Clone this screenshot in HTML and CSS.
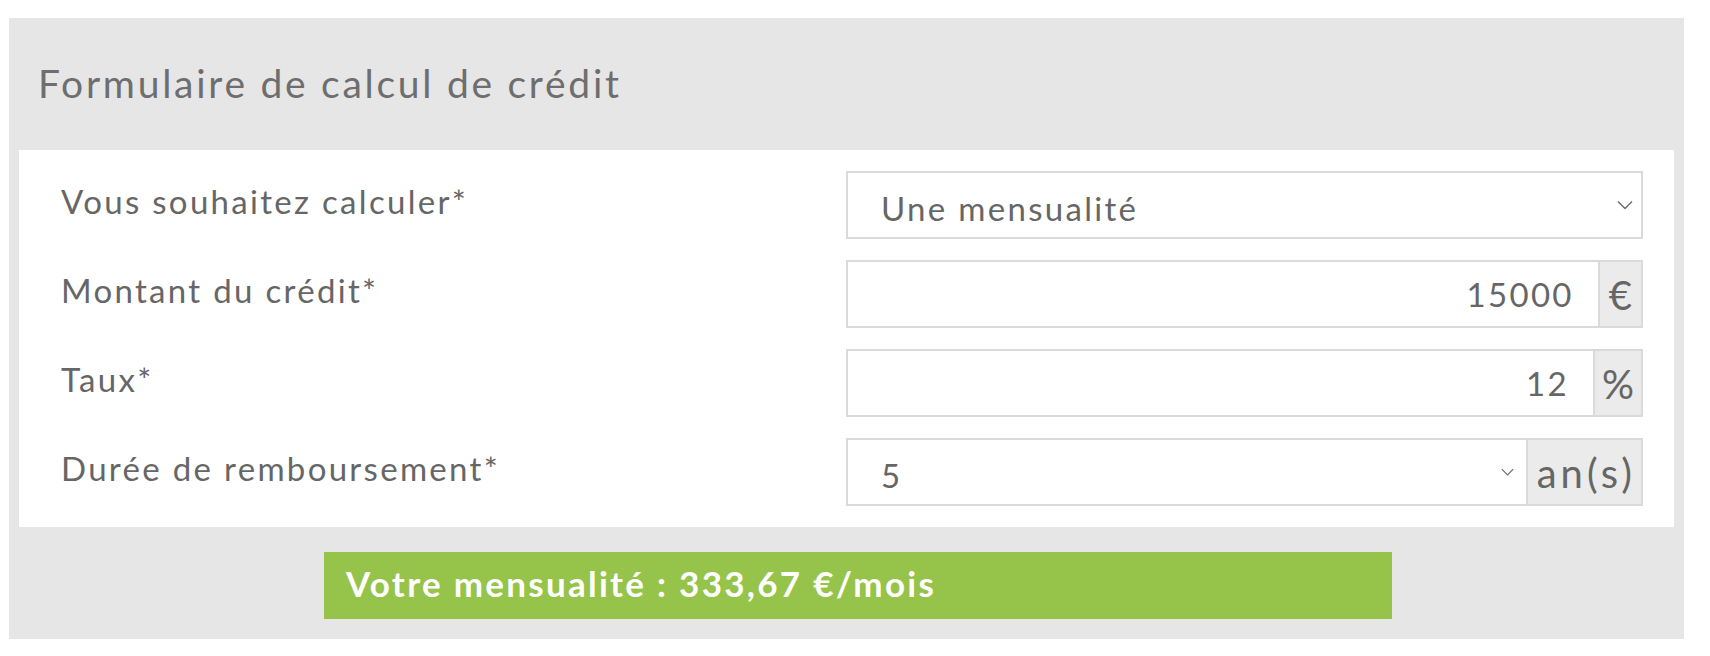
FILE: index.html
```html
<!DOCTYPE html>
<html lang="fr">
<head>
    <meta charset="UTF-8">
    <meta name="viewport" content="width=device-width, initial-scale=1.0">
    <title>Calcul de crédit</title>
    <link rel="stylesheet" href="styles.css">
</head>
<body>

    <!-- Credit calculator -->
    <div class="calc">
        <h2 class="calc-title">Formulaire de calcul de crédit</h2>

        <form class="calc-form">
            <label class="calc-label" for="type">Vous souhaitez calculer*</label>
            <div class="select-wrap">
                <select id="type" class="field">
                    <option>Une mensualité</option>
                    <option>Un montant</option>
                    <option>Une durée</option>
                </select>
                <svg class="chevron" width="16" height="9" viewBox="0 0 16 9"><polyline points="1,1 8,8 15,1" /></svg>
            </div>

            <label class="calc-label" for="amount">Montant du crédit*</label>
            <div class="input-group">
                <input id="amount" class="field field-num" type="text" value="15000">
                <span class="addon">€</span>
            </div>

            <label class="calc-label" for="rate">Taux*</label>
            <div class="input-group">
                <input id="rate" class="field field-num" type="text" value="12">
                <span class="addon addon-tight">%</span>
            </div>

            <label class="calc-label" for="years">Durée de remboursement*</label>
            <div class="input-group">
                <div class="select-wrap">
                    <select id="years" class="field">
                        <option>1</option>
                        <option>2</option>
                        <option>3</option>
                        <option>4</option>
                        <option selected>5</option>
                        <option>6</option>
                        <option>7</option>
                    </select>
                    <svg class="chevron chevron-sm" width="13" height="8" viewBox="0 0 16 9"><polyline points="1,1 8,8 15,1" /></svg>
                </div>
                <span class="addon">an(s)</span>
            </div>
        </form>

        <div class="calc-result">Votre mensualité : 333,67 €/mois</div>
    </div>

</body>
</html>
```

FILE: styles.css
```css
* {
    margin: 0;
    padding: 0;
    box-sizing: border-box;
}

body {
    font-family: Lato, "Open Sans", sans-serif;
    background-color: #fff;
    color: #666;
}

/* Grey panel */
.calc {
    width: 1675px;
    margin: 18px 0 0 9px;
    padding-bottom: 20px;
    background-color: #e6e6e6;
}

.calc-title {
    font-size: 39px;
    font-weight: 400;
    line-height: 46px;
    letter-spacing: 0.07em;
    color: #6e6e6e;
    padding: 42px 29px 44px;
}

/* White form block */
.calc-form {
    margin: 0 10px;
    background-color: #fff;
    padding: 21px 31px 21px 42px;
    display: grid;
    grid-template-columns: 1fr 797px;
    grid-auto-rows: 68px;
    row-gap: 21px;
}

.calc-label {
    font-size: 33px;
    line-height: 38px;
    letter-spacing: 0.07em;
    padding-top: 11px;
}

.field {
    font-family: inherit;
    font-size: 33px;
    letter-spacing: 0.07em;
    color: #666;
    width: 100%;
    height: 100%;
    border: 2px solid #dadada;
    background-color: #fff;
    outline: none;
}

select.field {
    appearance: none;
    -webkit-appearance: none;
    padding: 5px 40px 0 33px;
}

.select-wrap {
    position: relative;
    flex: 1;
    height: 100%;
}

.chevron {
    position: absolute;
    right: 10px;
    top: 50%;
    transform: translateY(-50%);
    fill: none;
    stroke: #6a6a6a;
    stroke-width: 1.4;
    pointer-events: none;
}

.chevron-sm {
    right: 12px;
}

/* Field with unit on the right */
.input-group {
    display: flex;
    height: 100%;
    border: 2px solid #dadada;
}

.input-group .field {
    border: none;
}

.field-num {
    text-align: right;
    padding: 0 24px 0 10px;
    flex: 1;
    min-width: 0;
}

.addon {
    display: flex;
    align-items: center;
    padding: 2px 5px 0 9px;
    font-size: 40px;
    letter-spacing: 0.1em;
    background-color: #ebebeb;
    border-left: 2px solid #dadada;
}

.addon-tight {
    padding: 2px 3px 0 7px;
}

/* Result bar */
.calc-result {
    margin: 25px 292px 0 315px;
    height: 67px;
    padding: 10px 22px 0;
    background-color: #96c34a;
    color: #fff;
    font-size: 35px;
    font-weight: 700;
    line-height: 42px;
    letter-spacing: 0.065em;
}
```
